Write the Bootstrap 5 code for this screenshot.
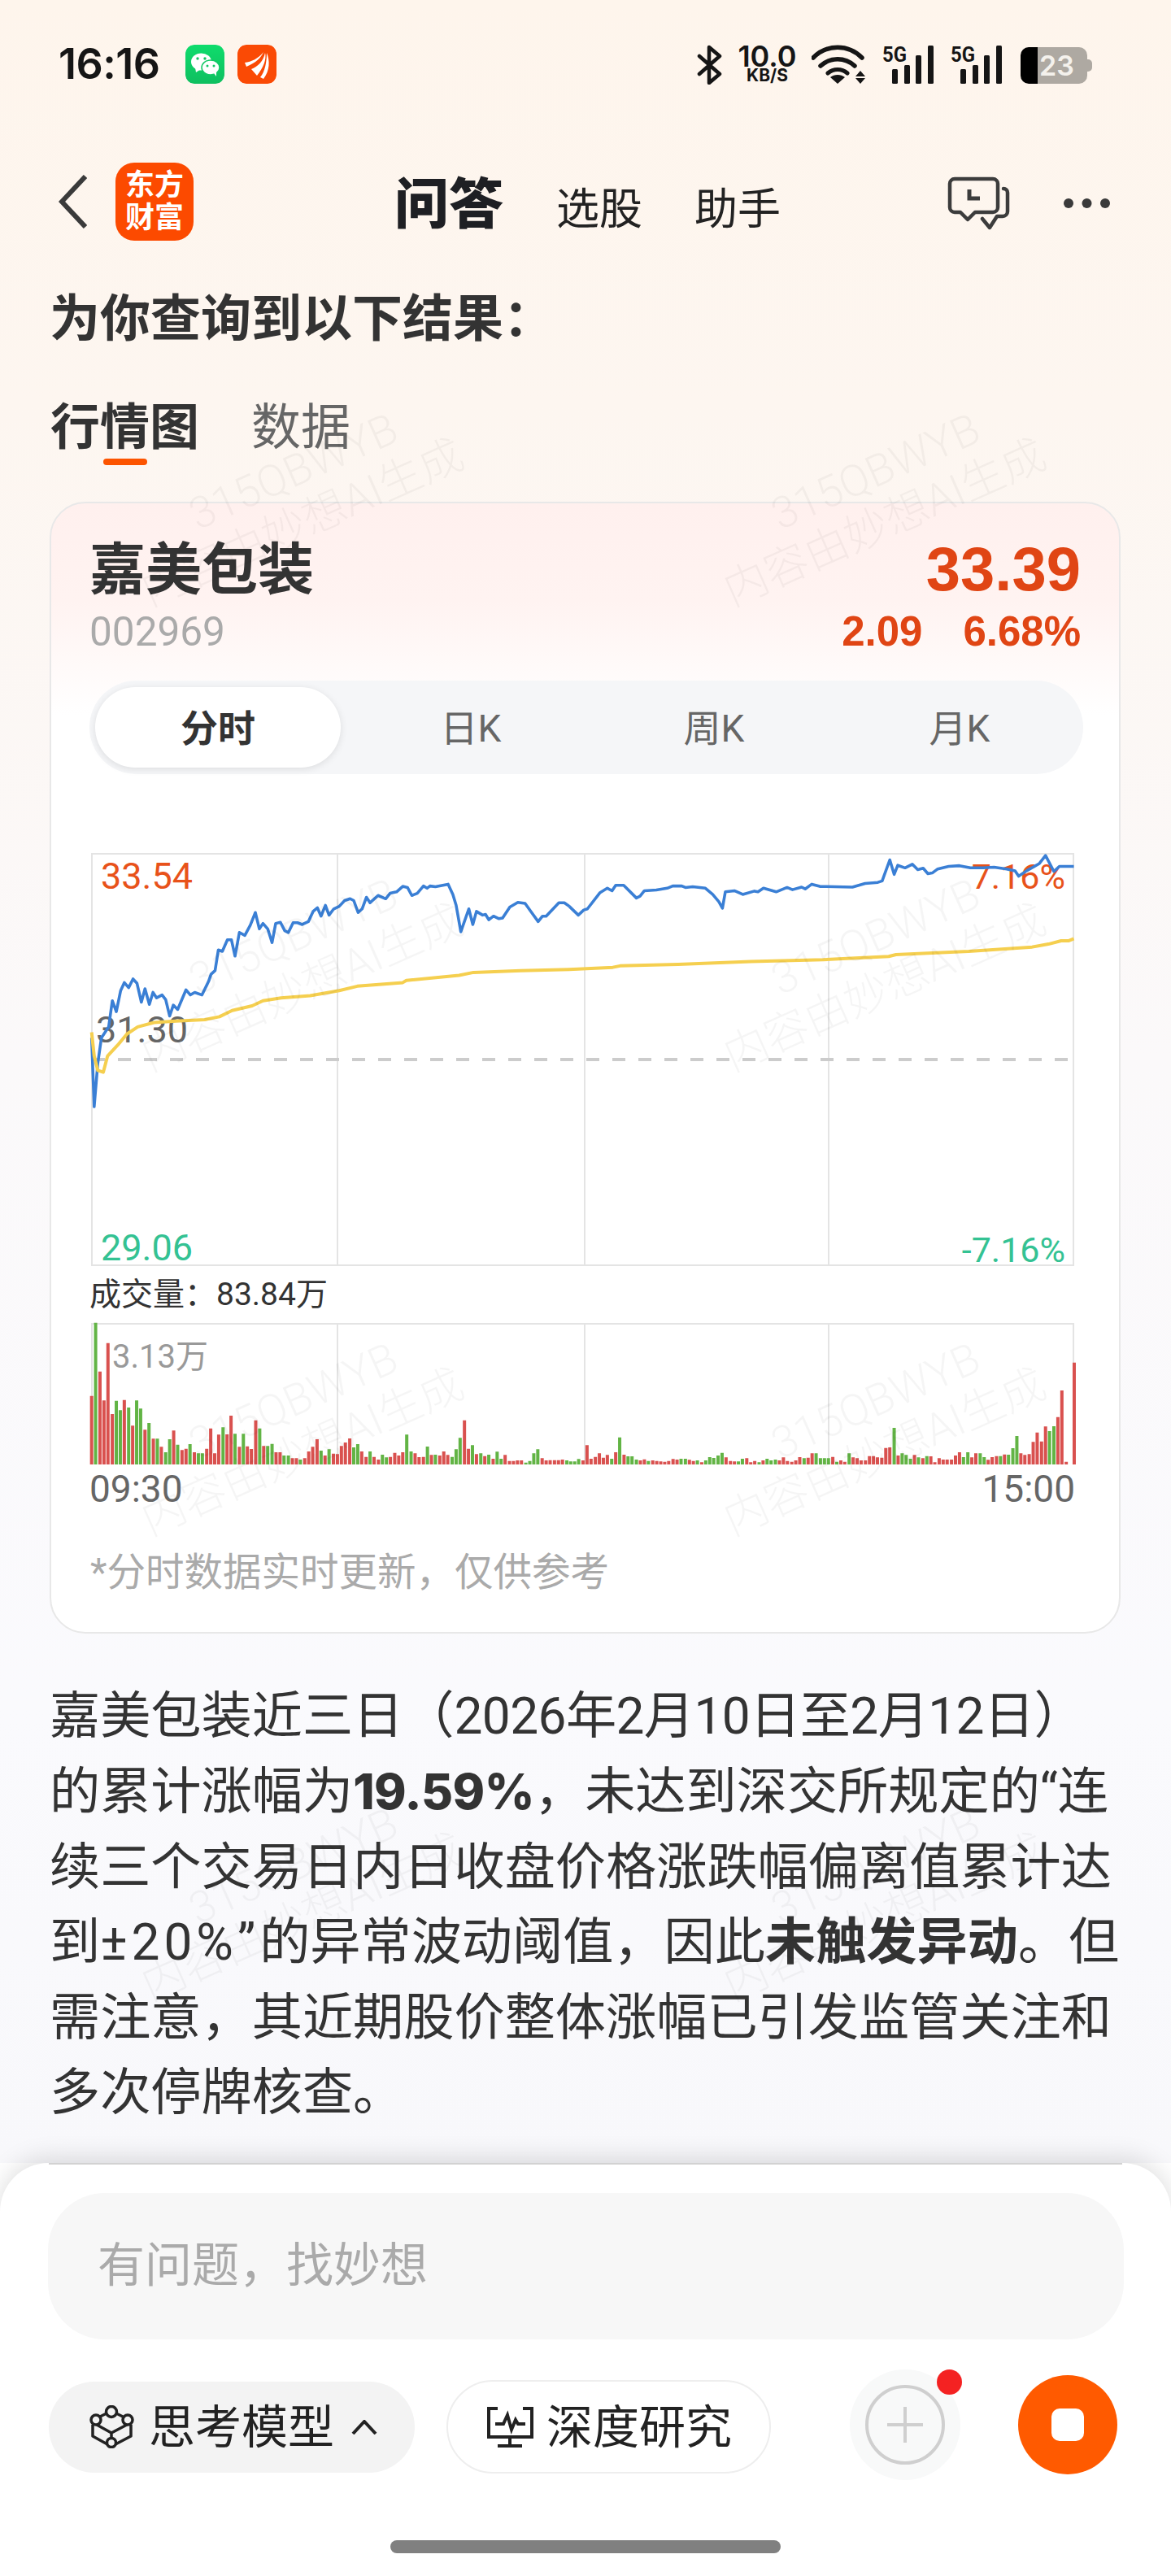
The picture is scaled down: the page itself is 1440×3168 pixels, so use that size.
<!DOCTYPE html>
<html lang="zh-CN">
<head>
<meta charset="utf-8">
<title>问答</title>
<link href="https://cdn.jsdelivr.net/npm/bootstrap@5.3.0/dist/css/bootstrap.min.css" rel="stylesheet">
<style>
html,body{margin:0;background:#fff}
body{font-family:Roboto,"Noto Sans CJK SC",sans-serif;color:#333}
.phone{position:relative;width:1440px;height:3168px;overflow:hidden;background:#fff}
.scroll-area{height:2660px;overflow:hidden;background:linear-gradient(180deg,#fef5ec 0,#fdf6f0 500px,#fbf9fa 1300px,#fafafd 2100px,#f8f8fb 2660px)}
.status{height:49px;margin-top:55px;padding:0 103px 0 72px}
.clock{font-family:Inter,sans-serif;font-weight:600;font-size:52px;line-height:47px;color:#151515;width:156px;letter-spacing:-.5px}
.app-ico{width:48px;height:48px;border-radius:11px;display:block}
.speed{width:73px;margin-left:19px;text-align:center;color:#151515}
.speed-a{font-size:36px;line-height:28px;font-family:Inter,sans-serif;font-weight:600}
.speed-b{font-size:21px;line-height:20px;font-family:Inter,sans-serif;font-weight:700}
.wifi-ico{margin-left:18px}.sig1{margin-left:19px;overflow:visible}.sig2{margin-left:21px;overflow:visible}
.batt{position:relative;width:82px;height:45px;margin:3px 0 0 23px;border-radius:10px;background:linear-gradient(90deg,#000 0,#000 21px,#aea9a2 21px);color:#f4f1ec;font-family:Inter,sans-serif;font-weight:600;font-size:34px;line-height:45px;padding-left:23px}
.batt::after{content:"";position:absolute;left:82px;top:15px;width:6px;height:15px;background:#aea9a2;border-radius:0 5px 5px 0}
.topnav{height:96px;margin-top:96px;padding:0 74px 0 72px}
.left-group{width:413px}
.logo{width:96px;height:96px;border-radius:23px;background:#fc4a00;color:#fff;font-weight:700;font-size:36px;line-height:40px;text-align:center;padding-top:8px;margin-left:35px}
.title-main{font-weight:900;font-size:67px;line-height:66px;color:#1e1f23;margin-top:19px}
.title-sub{font-size:53px;line-height:60px;color:#222;margin-top:28px}
.sub-a{margin-left:65px}.sub-b{margin-left:64px}
.nav-tools{height:96px;padding-top:4px}
.more-dots{margin-left:63px}
.h-result{font-weight:700;font-size:62px;line-height:80px;margin:57px 0 0 61px;color:#333}
.tabs-row{margin:63px 0 0 62px;height:76px;gap:64px}
.tab-on{position:relative;font-weight:700;font-size:61px;line-height:60px;color:#333}
.tab-on::after{content:"";position:absolute;left:65px;top:68px;width:54px;height:8px;border-radius:4px;background:#fc5400}
.tab-off{font-size:61px;line-height:60px;color:#666}
.stock-card{margin:45px 62px 0 61px;height:1392px;border:2px solid #e8e8e8;border-radius:44px;background:linear-gradient(180deg,#fff0ee 0,#fff3f1 120px,#fff 260px);padding:39px 44px 0 47px}
.stock-head{padding:0 3px 0 0}
.s-name{font-weight:700;font-size:69px;line-height:84px;color:#333;margin-top:2px}
.s-code{font-size:49.500px;line-height:60px;color:#aaa;margin-top:3px}
.s-price{font-family:"Liberation Sans",sans-serif;font-weight:700;font-size:76px;line-height:84px;color:#e04514;text-align:right}
.s-chg{font-family:"Liberation Sans",sans-serif;font-weight:700;font-size:51px;line-height:60px;color:#e04514;margin-top:5px;gap:50px}
.seg{height:115px;margin-top:30px;background:#f5f6f8;border-radius:58px;padding:8px 7px;flex-wrap:nowrap}
.seg .nav-link{flex:0 0 302px;height:99px;padding:0;font-size:46px;line-height:102px;text-align:center;color:#666;border-radius:50px}
.seg .nav-link.active{background:#fff;color:#333;font-weight:700;box-shadow:0 2px 10px rgba(0,0,0,.1)}
.seg .p2{padding-left:18px}.seg .p3{padding-left:12px}.seg .p4{padding-left:12px}
.price-chart{position:relative;margin:97px 0 0 2px;width:1209px;height:508px}
.price-chart svg,.vol-chart svg{position:absolute;left:0;top:0;overflow:visible;display:block}
.axis{position:absolute;font-size:45px;line-height:44px}
.up{color:#e8521a}.down{color:#34c293}.flat{color:#666}
.a-tl{left:12px;top:7px}.a-tr{right:11px;top:7px;font-size:43px}.a-ml{left:6px;top:196px}.a-bl{left:12px;top:464px}.a-br{right:11px;top:466px;font-size:43px}
.vol-title{font-size:39px;line-height:40px;margin:15px 0 0 0;color:#333}
.vol-chart{position:relative;margin:15px 0 0 2px;width:1209px;height:174px}
.vol-max{left:26px;top:20px;color:#999;font-size:40px}
.time-row{font-size:46px;line-height:44px;color:#666;margin:8px 10px 0 0}
.foot-note{font-size:47.5px;line-height:60px;color:#aaa;margin:51px 0 0 1px}
.answer{margin:56px 0 0 61px;font-size:62.2px;line-height:92.4px;color:#333;white-space:nowrap}
.answer b{font-weight:700}
.answer .pct-bold{font-family:Inter,sans-serif;font-size:60px;font-weight:800;letter-spacing:-.5px}
.answer .dates{letter-spacing:-.6px}
.answer .pct-wide{letter-spacing:5px}
.wm-layer{position:absolute;left:0;top:0;width:1440px;height:3168px;pointer-events:none;overflow:hidden}
.wm{position:absolute;width:423px;height:124px;transform-origin:0 100%;transform:rotate(-24deg);font-size:54px;font-weight:300;line-height:62px;text-align:center;text-indent:34px;color:rgba(0,0,0,.04);white-space:nowrap}
.wl{left:190px}.wr{left:906px}
.r1{top:634px}.r2{top:1206px}.r3{top:1777px}.r4{top:2349px}
.composer{position:relative;z-index:2;height:404px;background:#fff;border-radius:60px 60px 0 0;box-shadow:0 -6px 30px rgba(0,0,0,.13)}
.edge-line{height:2px;margin:0 60px;background:#d2d2d2}
.ask-input.form-control{display:block;width:1323px;height:180px;margin:35px 0 0 59px;background:#f7f7f7;border:0;border-radius:70px;padding:0 61px 2px;font-size:58px;color:#aaa;box-shadow:none}
.ask-input::placeholder{color:#aaa;opacity:1}
.tool-row{height:138px;margin-top:36px;padding-left:60px}
.pill-a.btn,.pill-b.btn{font-size:57px;line-height:60px;color:#222;padding:0;border-radius:60px;margin-top:5px}
.pill-a.btn span,.pill-b.btn span{padding-top:3px}
.pill-a.btn{width:450px;height:112px;background:#f3f3f3;border:0;padding-left:50px;gap:18px}
.pill-b.btn{width:399px;height:115px;background:#fff;border:2px solid #eee;margin-left:39px;padding-left:48px;gap:16px}
.chev{margin-left:3px}
.plus-halo{position:relative;width:136px;height:136px;margin-left:97px;border-radius:50%;background:#f8f9f9}
.plus-halo svg{display:block}
.red-dot{position:absolute;left:107px;top:0;width:31px;height:31px;border-radius:50%;background:#f42222}
.stop-btn{width:122px;height:122px;margin-left:71px;border-radius:50%;background:#ff5a00}
.stop-sq{width:40px;height:40px;border-radius:10px;background:#fff}
.home-zone{position:relative;z-index:3;height:104px;background:#fff;padding-top:60px}
.home-bar{width:480px;height:16px;margin:0 auto;border-radius:8px;background:#808080}
</style>
</head>
<body>
<div class="phone">
  <div class="scroll-area">
    <div class="status d-flex align-items-start">
      <div class="clock">16:16</div>
      <svg class="app-ico me-3" viewBox="0 0 48 48"><defs><linearGradient id="wg" x1="0" y1="0" x2="0" y2="1"><stop offset="0" stop-color="#0fdc6c"/><stop offset="1" stop-color="#0fbf5f"/></linearGradient></defs><rect width="48" height="48" rx="11" fill="url(#wg)"/><ellipse cx="19.5" cy="21" rx="12.5" ry="10.5" fill="#fff"/><path d="M12 28l1 6 6-4z" fill="#fff"/><circle cx="15" cy="17" r="1.7" fill="#14c564"/><circle cx="24" cy="17" r="1.7" fill="#14c564"/><ellipse cx="31" cy="28" rx="11" ry="9" fill="#fff" stroke="#14c866" stroke-width="1.5"/><path d="M35 35l3 4v-6z" fill="#fff"/><circle cx="27" cy="26" r="1.5" fill="#14c564"/><circle cx="35" cy="26" r="1.5" fill="#14c564"/></svg>
      <svg class="app-ico" viewBox="0 0 48 48"><rect width="48" height="48" rx="11" fill="#fa4a05"/><path d="M9 22c8-1 17-5 23-13-3 7-9 13-21 18z" fill="#fff"/><path d="M17 30c8-3 15-10 17-20 2 8-2 18-10 28z" fill="#fff"/><path d="M28 40c6-7 8-19 8-30 4 9 4 22-4 32z" fill="#fff"/></svg>
      <div class="ms-auto d-flex align-items-start">
        <svg width="31" height="49" viewBox="0 0 31 49" fill="none" stroke="#151515" stroke-width="4.5" stroke-linejoin="round" stroke-linecap="round"><path d="M3 14l25 22-13 11V3l13 11L3 36"/></svg>
        <div class="speed"><div class="speed-a">10.0</div><div class="speed-b">KB/S</div></div>
        <svg class="wifi-ico" width="68" height="49" viewBox="0 0 68 49" fill="none" stroke="#151515" stroke-width="5.5" stroke-linecap="round"><path d="M2 16c17-17 43-17 60 0"/><path d="M11 26c12-11 30-11 42 0"/><path d="M20 35c7-6 17-6 24 0" stroke-width="5"/><path d="M32 48l-9-8c5-4 13-4 18 0z" fill="#151515" stroke="none"/><path d="M60 32l6 7H54zM60 48l6-7H54z" fill="#151515" stroke="none"/></svg>
        <svg class="sig1" width="63" height="49" viewBox="0 0 63 49"><text x="0" y="21" font-family="Roboto" font-weight="700" font-size="26" textLength="30" lengthAdjust="spacingAndGlyphs" fill="#151515">5G</text><g fill="#151515"><rect x="12" y="30" width="7" height="18" rx="1.5"/><rect x="27" y="25" width="7" height="23" rx="1.5"/><rect x="41" y="13" width="7" height="35" rx="1.5"/><rect x="56" y="1" width="7" height="47" rx="1.5"/></g></svg>
        <svg class="sig2" width="63" height="49" viewBox="0 0 63 49"><text x="0" y="21" font-family="Roboto" font-weight="700" font-size="26" textLength="30" lengthAdjust="spacingAndGlyphs" fill="#151515">5G</text><g fill="#151515"><rect x="12" y="30" width="7" height="18" rx="1.5"/><rect x="27" y="25" width="7" height="23" rx="1.5"/><rect x="41" y="13" width="7" height="35" rx="1.5"/><rect x="56" y="1" width="7" height="47" rx="1.5"/></g></svg>
        <div class="batt">23</div>
      </div>
    </div>

    <div class="topnav d-flex align-items-start">
      <div class="left-group d-flex align-items-center">
        <svg width="35" height="66" viewBox="0 0 35 66" fill="none" stroke="#3a3a3a" stroke-width="6"><path d="M33 2L4 33l29 31"/></svg>
        <div class="logo">东方<br>财富</div>
      </div>
      <div class="title-main">问答</div>
      <div class="title-sub sub-a">选股</div>
      <div class="title-sub sub-b">助手</div>
      <div class="ms-auto d-flex align-items-center nav-tools">
        <svg width="80" height="72" viewBox="1162 210 80 72" fill="none" stroke="#3c3c3c" stroke-width="4.5" stroke-linejoin="round" stroke-linecap="round"><path d="M1172 216H1219a6 6 0 0 1 6 6V251a6 6 0 0 1-6 6H1197L1188 266 1179 257H1172a6 6 0 0 1-6-6V222a6 6 0 0 1 6-6Z"/><path d="M1232 228a5 5 0 0 1 5 5V256a6 6 0 0 1-6 6H1224L1215 276 1206 265"/><path d="M1190 229V240H1203" stroke-linejoin="miter" stroke-linecap="butt" stroke-width="5"/></svg>
        <svg class="more-dots" width="59" height="14" viewBox="0 0 59 14" fill="#3a3a3a"><circle cx="7" cy="7" r="6"/><circle cx="29.500" cy="7" r="6"/><circle cx="52" cy="7" r="6"/></svg>
      </div>
    </div>

    <div class="h-result">为你查询到以下结果&#xFF1A;</div>
    <div class="tabs-row d-flex align-items-start">
      <div class="tab-on">行情图</div>
      <div class="tab-off">数据</div>
    </div>

    <div class="card stock-card">
      <div class="stock-head d-flex justify-content-between">
        <div>
          <div class="s-name">嘉美包装</div>
          <div class="s-code">002969</div>
        </div>
        <div>
          <div class="s-price">33.39</div>
          <div class="s-chg d-flex justify-content-end"><span>2.09</span><span>6.68%</span></div>
        </div>
      </div>
      <div class="nav nav-pills seg">
        <a class="nav-link active" href="#">分时</a>
        <a class="nav-link p2" href="#">日K</a>
        <a class="nav-link p3" href="#">周K</a>
        <a class="nav-link p4" href="#">月K</a>
      </div>

      <div class="price-chart">
        <svg width="1209" height="508" viewBox="112 1049 1209 508" fill="none">
          <rect x="113" y="1050" width="1207" height="506" stroke="#e4e4e4" stroke-width="2"/>
          <path d="M415 1050V1556M719 1050V1556M1019 1050V1556" stroke="#e4e4e4" stroke-width="2"/>
          <path d="M113 1303H1315" stroke="#ccc" stroke-width="4" stroke-dasharray="16 16"/>
        </svg>
        <span class="axis up a-tl">33.54</span>
        <span class="axis up a-tr">7.16%</span>
        <span class="axis flat a-ml">31.30</span>
        <span class="axis down a-bl">29.06</span>
        <span class="axis down a-br">-7.16%</span>
        <svg width="1209" height="508" viewBox="112 1049 1209 508" fill="none">
          <g transform="translate(60 620) scale(.44643)" stroke-width="8" stroke-linejoin="round">
            <path stroke="#3a7fd5" d="M118 1470 125 1660 135 1540 145 1470 165 1440 175 1368 186 1398 198 1340 208 1318 220 1332 232 1308 243 1320 255 1372 265 1335 277 1378 287 1345 297 1360 312 1352 322 1365 333 1410 343 1380 355 1392 378 1338 390 1352 402 1345 422 1352 440 1315 447 1295 458 1285 467 1228 478 1232 492 1200 503 1200 513 1245 525 1180 540 1188 555 1160 569 1125 580 1170 590 1155 603 1170 615 1208 625 1155 638 1152 650 1175 660 1180 673 1153 685 1153 698 1158 715 1150 728 1122 740 1112 750 1135 762 1105 772 1132 785 1115 800 1108 815 1092 830 1087 840 1092 852 1125 863 1115 875 1083 885 1098 907 1078 928 1087 940 1072 958 1068 975 1053 988 1056 1000 1078 1015 1072 1032 1052 1042 1058 1050 1052 1065 1054 1100 1047 1113 1075 1122 1105 1135 1178 1157 1115 1168 1158 1178 1122 1195 1132 1203 1130 1212 1145 1225 1135 1240 1142 1250 1140 1270 1110 1292 1097 1312 1100 1330 1125 1348 1150 1360 1135 1370 1135 1405 1098 1420 1098 1434 1108"/>
            <path stroke="#f5cf4f" stroke-width="9" d="M118 1455 125 1520 135 1560 150 1565 162 1520 190 1490 215 1460 245 1440 290 1428 350 1424 430 1420 470 1412 505 1395 560 1382 590 1368 640 1360 720 1354 800 1340 850 1328 975 1318 985 1312 1130 1298 1170 1290 1300 1285 1434 1282"/>
          </g>
          <g transform="translate(700 620) scale(.44643)" stroke-width="8" stroke-linejoin="round">
            <path stroke="#f5cf4f" stroke-width="9" d="M0 1282 120 1276 140 1272 300 1268 500 1260 700 1255 880 1246 900 1241 1100 1232 1275 1220 1320 1212 1355 1203 1375 1203 1390 1197"/>
            <path stroke="#3a7fd5" d="M0 1108 25 1132 40 1118 50 1115 85 1070 105 1058 118 1065 128 1050 150 1050 185 1085 195 1080 207 1065 240 1063 270 1058 285 1052 310 1052 320 1056 340 1054 375 1058 395 1075 412 1095 422 1113 430 1068 455 1065 478 1075 510 1066 520 1068 535 1058 570 1068 600 1056 615 1062 640 1055 650 1060 668 1047 690 1053 780 1055 815 1045 850 1042 862 1038 883 980 895 1020 905 995 925 1002 945 992 960 1007 975 1003 988 1018 1000 1016 1015 1005 1045 998 1075 996 1105 1002 1140 1002 1170 1000 1205 1005 1228 1010 1238 1025 1260 1010 1295 990 1312 968 1335 1012 1350 998 1390 998"/>
          </g>
        </svg>
      </div>

      <div class="vol-title">成交量&#xFF1A;83.84万</div>
      <div class="vol-chart">
        <svg width="1209" height="174" viewBox="112 1627 1209 174" fill="none">
          <path d="M113 1801V1628H1320V1801M415 1628V1801M719 1628V1801M1019 1628V1801" stroke="#e4e4e4" stroke-width="2"/>
          <g transform="translate(60 1500) scale(.44643 .33333)" stroke-width="4">
            <path vector-effect="non-scaling-stroke" stroke="#d9514f" d="M118 650V903M141 560V903M152 667V903M163 455V903M175 717V903M208 665V903M231 760V903M265 775V903M288 808V903M310 838V903M344 778V903M367 850V903M378 845V903M401 858V903M435 845V903M446 770V903M457 862V903M468 793V903M491 792V903M502 723V903M525 838V903M547 836V903M558 846V903M570 740V903M592 835V903M626 858V903M637 858V903M671 880V903M682 880V903M705 880V903M716 855V903M727 838V903M739 810V903M761 870V903M784 863V903M795 865V903M806 835V903M817 822V903M829 807V903M862 855V903M874 875V903M896 875V903M908 885V903M941 875V903M953 860V903M964 870V903M975 858V903M1009 862V903M1020 876V903M1032 875V903M1054 868V903M1077 870V903M1088 855V903M1099 868V903M1145 740V903M1156 845V903M1178 865V903M1201 872V903M1224 882V903M1257 868V903M1269 890V903M1280 890V903M1291 888V903M1302 888V903M1359 880V903M1370 888V903M1381 887V903M1393 887V903M1404 887V903M1415 885V903"/>
            <path vector-effect="non-scaling-stroke" stroke="#62b445" d="M129 380V903M186 668V903M197 703V903M220 693V903M242 667V903M253 697V903M276 750V903M299 808V903M322 858V903M333 810V903M355 830V903M389 828V903M412 862V903M423 862V903M480 766V903M513 790V903M536 790V903M581 770V903M603 835V903M615 827V903M648 870V903M660 870V903M693 885V903M750 852V903M772 847V903M840 840V903M851 828V903M885 855V903M919 867V903M930 877V903M986 793V903M998 855V903M1043 837V903M1065 867V903M1111 875V903M1122 847V903M1133 805V903M1167 832V903M1190 862V903M1212 867V903M1235 856V903M1246 882V903M1314 896V903M1325 890V903M1336 862V903M1347 847V903M1427 888V903"/>
          </g>
          <g transform="translate(700 1500) scale(.44643 .33333)" stroke-width="4">
            <path vector-effect="non-scaling-stroke" stroke="#d9514f" d="M38 888V903M49 832V903M60 882V903M72 875V903M83 862V903M94 878V903M105 868V903M128 858V903M151 867V903M196 888V903M207 884V903M230 888V903M241 890V903M252 892V903M263 893V903M274 890V903M286 883V903M297 885V903M331 886V903M342 890V903M365 895V903M432 877V903M444 890V903M455 892V903M489 880V903M500 895V903M511 890V903M534 888V903M579 888V903M590 877V903M601 890V903M613 893V903M624 888V903M635 876V903M658 878V903M669 862V903M726 875V903M748 888V903M759 893V903M782 877V903M793 880V903M804 888V903M816 888V903M827 872V903M838 872V903M849 877V903M861 878V903M872 842V903M883 840V903M906 870V903M951 868V903M974 880V903M996 873V903M1007 895V903M1019 880V903M1030 885V903M1041 885V903M1053 885V903M1064 870V903M1075 858V903M1109 877V903M1120 862V903M1154 886V903M1165 876V903M1177 872V903M1199 866V903M1244 862V903M1255 868V903M1267 865V903M1278 820V903M1289 785V903M1301 818V903M1312 763V903M1346 728V903M1357 630V903M1369 893V903M1391 527V903"/>
            <path vector-effect="non-scaling-stroke" stroke="#62b445" d="M4 892V903M15 892V903M26 883V903M117 882V903M139 803V903M162 873V903M173 873V903M185 885V903M218 890V903M308 882V903M320 882V903M353 888V903M376 888V903M387 876V903M398 879V903M410 870V903M421 860V903M466 892V903M477 882V903M523 895V903M545 882V903M556 888V903M568 885V903M647 880V903M680 862V903M692 880V903M703 880V903M714 880V903M737 893V903M771 862V903M895 768V903M917 862V903M928 868V903M940 882V903M962 877V903M985 872V903M1086 876V903M1098 858V903M1132 862V903M1143 876V903M1188 872V903M1210 867V903M1222 843V903M1233 798V903M1323 780V903M1335 762V903"/>
          </g>
        </svg>
        <span class="axis vol-max">3.13万</span>
      </div>
      <div class="time-row d-flex justify-content-between"><span>09:30</span><span>15:00</span></div>
      <div class="foot-note">*分时数据实时更新&#xFF0C;仅供参考</div>
    </div>

    <div class="answer">嘉美包装近三日&#xFF08;<span class="dates">2026年2月10日至2月12日</span>&#xFF09;<br>的累计涨幅为<b class="pct-bold">19.59%</b>&#xFF0C;未达到深交所规定的“连<br>续三个交易日内日收盘价格涨跌幅偏离值累计达<br>到<span class="pct-wide">±20%”</span>的异常波动阈值&#xFF0C;因此<b>未触发异动</b>。但<br>需注意&#xFF0C;其近期股价整体涨幅已引发监管关注和<br>多次停牌核查。</div>
  </div>

  <div class="wm-layer">
    <div class="wm wl r1">315QBWYB<br>内容由妙想AI生成</div><div class="wm wr r1">315QBWYB<br>内容由妙想AI生成</div>
    <div class="wm wl r2">315QBWYB<br>内容由妙想AI生成</div><div class="wm wr r2">315QBWYB<br>内容由妙想AI生成</div>
    <div class="wm wl r3">315QBWYB<br>内容由妙想AI生成</div><div class="wm wr r3">315QBWYB<br>内容由妙想AI生成</div>
    <div class="wm wl r4">315QBWYB<br>内容由妙想AI生成</div><div class="wm wr r4">315QBWYB<br>内容由妙想AI生成</div>
  </div>

  <div class="composer">
    <div class="edge-line"></div>
    <input class="form-control ask-input" type="text" placeholder="有问题&#xFF0C;找妙想">
    <div class="tool-row d-flex align-items-center">
      <button class="btn pill-a d-flex align-items-center" type="button">
        <svg width="55" height="53" viewBox="0 0 55 53" fill="none" stroke="#222" stroke-width="3.5" stroke-linejoin="round"><circle cx="27" cy="8" r="6.500"/><circle cx="8" cy="18" r="6"/><circle cx="47" cy="18" r="6"/><circle cx="27" cy="46" r="5.500"/><path d="M4 24V38L22 48M51 24V38L32 48M9 24L27 34 46 24M27 34V40M21 10 13 14M33 10 41 14"/></svg>
        <span>思考模型</span>
        <svg class="chev" width="32" height="18" viewBox="0 0 32 18" fill="none" stroke="#222" stroke-width="4"><path d="M2 17L16 2l14 15"/></svg>
      </button>
      <button class="btn pill-b d-flex align-items-center" type="button">
        <svg width="57" height="50" viewBox="0 0 57 50" fill="none" stroke="#222" stroke-width="4"><path d="M13 2H2V37H55V2H44M10 21H20L25 10 30 28 35 16 38 21H47M28 37V47M13 48H43"/></svg>
        <span>深度研究</span>
      </button>
      <div class="plus-halo d-flex align-items-center justify-content-center">
        <svg width="100" height="100" viewBox="0 0 100 100" fill="none" stroke="#cfcfcf" stroke-width="4"><circle cx="50" cy="50" r="47"/><path d="M50 28V72M28 50H72"/></svg>
        <span class="red-dot"></span>
      </div>
      <div class="stop-btn d-flex align-items-center justify-content-center"><span class="stop-sq"></span></div>
    </div>
  </div>
  <div class="home-zone"><div class="home-bar"></div></div>
</div>
</body>
</html>
